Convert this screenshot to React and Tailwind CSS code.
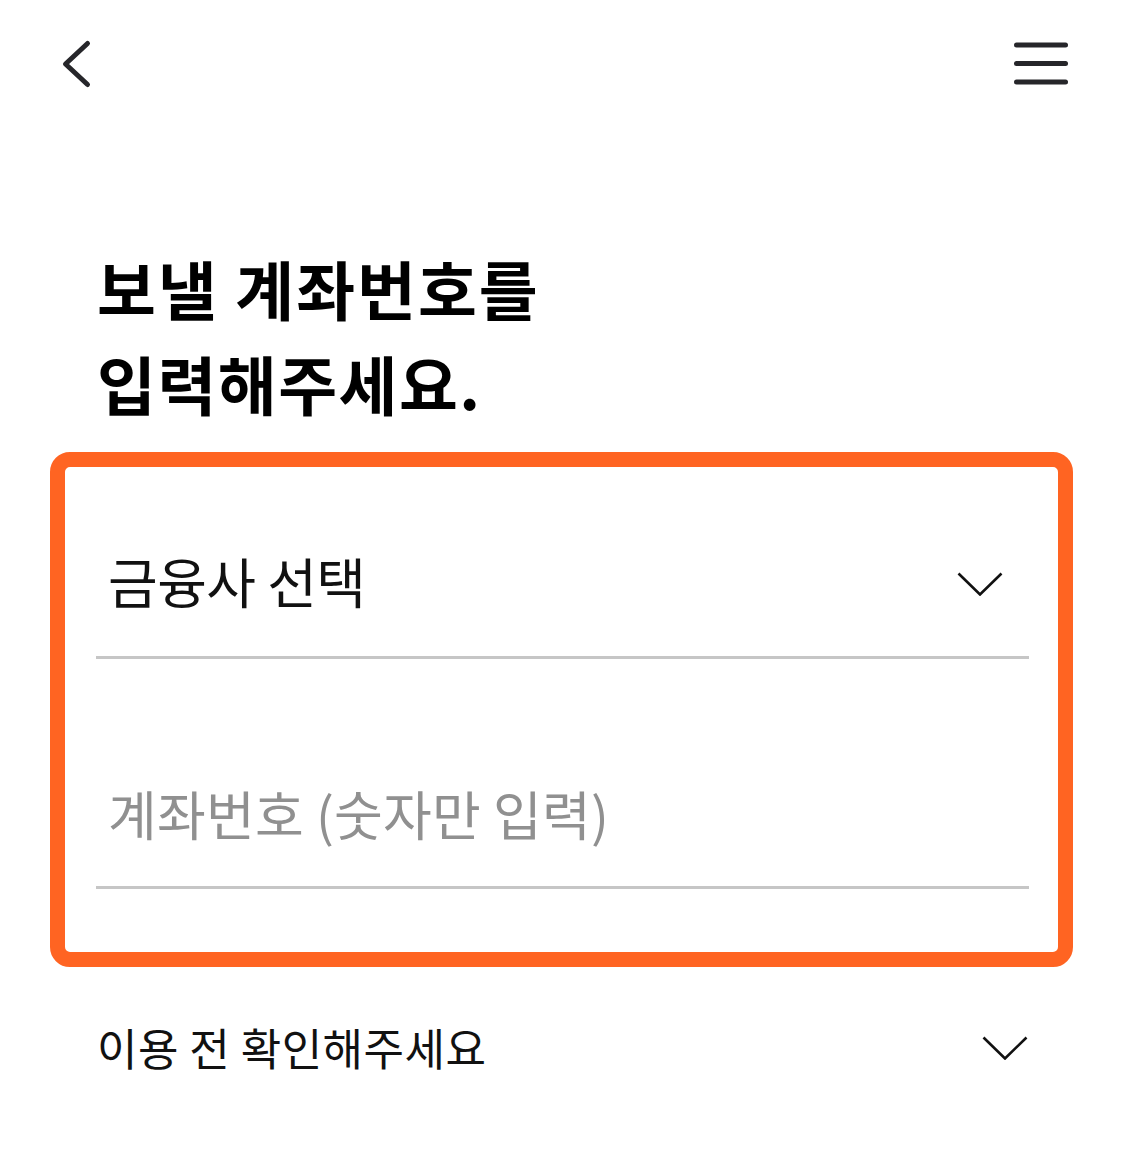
import React, { useState } from 'react'

const font = { fontFamily: '"Noto Sans CJK KR", "Noto Sans", sans-serif' }

function ChevronDown() {
  return (
    <svg width="46" height="24" viewBox="0 0 46 24" fill="none">
      <path d="M1.5 1.5 L23 22.5 L44.5 1.5" stroke="#111" strokeWidth="2.6" />
    </svg>
  )
}

function App() {
  const [account, setAccount] = useState('')

  return (
    <div className="w-[1125px] min-h-[1149px] bg-white text-[#111]" style={font}>
      {/* 상단 바 */}
      <div className="flex justify-between pl-[58px] pr-[51px] pt-[34px]">
        <svg width="40" height="60" viewBox="0 0 40 60" fill="none">
          <path
            d="M29.5 9.5 L7.5 30 L29.5 50.5"
            stroke="#26262a"
            strokeWidth="5"
            strokeLinecap="round"
            strokeLinejoin="round"
          />
        </svg>
        <svg width="66" height="58" viewBox="0 0 66 58" fill="none">
          <g stroke="#26262a" strokeWidth="5" strokeLinecap="round">
            <path d="M8.5 11 H57.5" />
            <path d="M8.5 29.5 H57.5" />
            <path d="M8.5 48 H57.5" />
          </g>
        </svg>
      </div>

      {/* 제목 */}
      <h1 className="mt-[146px] pl-[97px] text-[64px] font-bold leading-[95px] text-black">
        <span className="tracking-[2px]">보낼 계좌번호를</span>
        <br />
        <span className="tracking-[1.5px]">입력해주세요.</span>
      </h1>

      {/* 입력 영역 */}
      <div className="mt-[22px] ml-[50px] w-[1023px] border-[15px] border-[#ff6422] rounded-[20px] pl-[31px] pr-[29px] pb-[63px]">
        <div className="h-[192px] pt-[38px] flex items-center justify-between border-b-[3px] border-[#c6c6c6]">
          <span className="pl-[12px] text-[54px] tracking-[-0.5px] leading-none text-[#111]">금융사 선택</span>
          <span className="pr-[26px] pt-[6px]">
            <ChevronDown />
          </span>
        </div>
        <div className="h-[230px] pt-[80px] flex items-center border-b-[3px] border-[#c6c6c6]">
          <input
            className="w-full pl-[12px] text-[53px] tracking-[0.2px] leading-none outline-none bg-transparent placeholder:text-[#909090]"
            style={font}
            placeholder="계좌번호 (숫자만 입력)"
            value={account}
            onChange={(e) => setAccount(e.target.value.replace(/[^0-9]/g, ''))}
          />
        </div>
      </div>

      {/* 안내 */}
      <div className="mt-[40px] ml-[97px] w-[931px] h-[80px] flex items-center justify-between">
        <span className="text-[44px] tracking-[0.5px] leading-none">이용 전 확인해주세요</span>
        <span className="pt-[2px]">
          <ChevronDown />
        </span>
      </div>
    </div>
  )
}

export default App
